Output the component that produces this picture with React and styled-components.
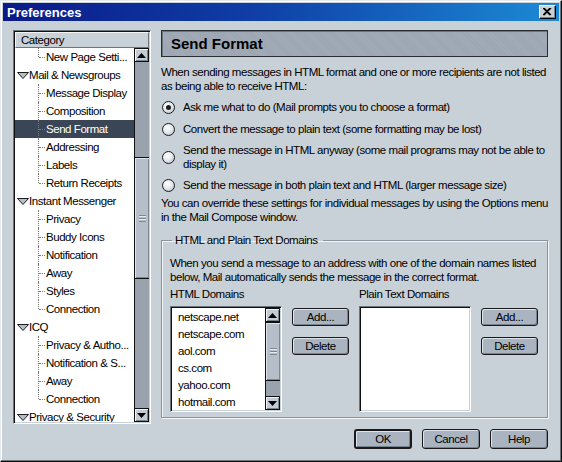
import React from "react";
import styled, { createGlobalStyle, css } from "styled-components";

const GlobalStyle = createGlobalStyle`
  html, body {
    margin: 0;
    padding: 0;
    background: #c8d0d8;
  }
  body {
    font-family: "Liberation Sans", Arial, sans-serif;
    font-size: 11.5px;
    letter-spacing: -0.45px;
    color: #000;
  }
`;

const categories = [
  { label: "New Page Setti...", child: true, last: true },
  { label: "Mail & Newsgroups" },
  { label: "Message Display", child: true },
  { label: "Composition", child: true },
  { label: "Send Format", child: true, selected: true },
  { label: "Addressing", child: true },
  { label: "Labels", child: true },
  { label: "Return Receipts", child: true, last: true },
  { label: "Instant Messenger" },
  { label: "Privacy", child: true },
  { label: "Buddy Icons", child: true },
  { label: "Notification", child: true },
  { label: "Away", child: true },
  { label: "Styles", child: true },
  { label: "Connection", child: true, last: true },
  { label: "ICQ" },
  { label: "Privacy & Autho...", child: true },
  { label: "Notification & S...", child: true },
  { label: "Away", child: true },
  { label: "Connection", child: true, last: true },
  { label: "Privacy & Security" },
];

const radios = [
  { text: "Ask me what to do (Mail prompts you to choose a format)", checked: true },
  { text: "Convert the message to plain text (some formatting may be lost)" },
  {
    text: (
      <>
        Send the message in HTML anyway (some mail programs may not be able to
        <br />
        display it)
      </>
    ),
  },
  { text: "Send the message in both plain text and HTML (larger message size)" },
];

const htmlDomains = [
  "netscape.net",
  "netscape.com",
  "aol.com",
  "cs.com",
  "yahoo.com",
  "hotmail.com",
];

const Arrow = ({ up }) => (
  <svg width="9" height="5" viewBox="0 0 9 5">
    <polygon points={up ? "4.5,0 9,5 0,5" : "0,0 9,0 4.5,5"} fill="#000" />
  </svg>
);

const Twisty = () => (
  <svg width="12" height="7" viewBox="0 0 12 7">
    <polygon
      points="0.5,0.5 11.5,0.5 6,6.5"
      fill="#b4bec9"
      stroke="#1c1c1c"
      strokeWidth="1"
    />
  </svg>
);

const Scrollbar = ({ thumbTop, thumbHeight }) => (
  <ScrollTrack>
    <ArrowButton>
      <Arrow up />
    </ArrowButton>
    <TrackArea>
      <Thumb style={{ top: thumbTop, height: thumbHeight }}>
        <Grip />
      </Thumb>
    </TrackArea>
    <ArrowButton>
      <Arrow />
    </ArrowButton>
  </ScrollTrack>
);

const App = () => {
  return (
    <>
      <GlobalStyle />
      <Window>
        <TitleBar>
          <TitleText>Preferences</TitleText>
          <CloseButton>
            <svg width="9" height="8" viewBox="0 0 9 8">
              <path d="M1 0 L8 7 M8 0 L1 7 M0 0 L7 7 M7 0 L0 7" stroke="#000" strokeWidth="1.2" />
            </svg>
          </CloseButton>
        </TitleBar>

        <Body>
          <Columns>
            <TreeBox>
              <TreeHeader>Category</TreeHeader>
              <TreeInner>
                <TreeRows>
                  {categories.map((item, i) => (
                    <TreeRow key={i} $selected={item.selected}>
                      {item.child ? (
                        <Connector $last={item.last} />
                      ) : (
                        <TwistyWrap>
                          <Twisty />
                        </TwistyWrap>
                      )}
                      <span>{item.label}</span>
                    </TreeRow>
                  ))}
                </TreeRows>
                <Scrollbar thumbTop={95} thumbHeight={122} />
              </TreeInner>
            </TreeBox>

            <Main>
              <PanelHeader>Send Format</PanelHeader>
              <Para $top={8}>
                When sending messages in HTML format and one or more recipients are not listed
                <br />
                as being able to receive HTML:
              </Para>
              <RadioGroup>
                {radios.map((r, i) => (
                  <RadioRow key={i}>
                    <Radio $checked={r.checked} />
                    <RadioText>{r.text}</RadioText>
                  </RadioRow>
                ))}
              </RadioGroup>
              <Para $top={3}>
                You can override these settings for individual messages by using the Options menu
                <br />
                in the Mail Compose window.
              </Para>

              <Group>
                <Legend>HTML and Plain Text Domains</Legend>
                <Para $top={9}>
                  When you send a message to an address with one of the domain names listed
                  <br />
                  below, Mail automatically sends the message in the correct format.
                </Para>
                <DomainGrid>
                  <ListLabel>HTML Domains</ListLabel>
                  <ListLabel>Plain Text Domains</ListLabel>
                  <ListBox>
                    <ListItems>
                      {htmlDomains.map((d) => (
                        <ListItem key={d}>{d}</ListItem>
                      ))}
                    </ListItems>
                    <Scrollbar thumbTop={0} thumbHeight={59} />
                  </ListBox>
                  <ButtonStack>
                    <Button>Add...</Button>
                    <Button>Delete</Button>
                  </ButtonStack>
                  <ListBox />
                  <ButtonStack>
                    <Button>Add...</Button>
                    <Button>Delete</Button>
                  </ButtonStack>
                </DomainGrid>
              </Group>
            </Main>
          </Columns>

          <Footer>
            <DialogButton $default>OK</DialogButton>
            <DialogButton>Cancel</DialogButton>
            <DialogButton>Help</DialogButton>
          </Footer>
        </Body>
      </Window>
    </>
  );
};

const Window = styled.div`
  box-sizing: border-box;
  width: 562px;
  height: 462px;
  background: #c8d0d8;
  border-top: 1px solid #e6eaee;
  border-left: 1px solid #e6eaee;
  border-right: 1px solid #101010;
  border-bottom: 1px solid #101010;
  box-shadow: inset -1px -1px 0 #6c747c, inset 1px 1px 0 #ffffff;
  padding: 2px 2px 0 2px;
`;

const TitleBar = styled.div`
  height: 18px;
  display: flex;
  align-items: center;
  justify-content: space-between;
  padding: 0 3px 0 4px;
  background: linear-gradient(90deg, #0a1a88 0%, #0f3ea6 45%, #1c8ad6 100%);
`;

const TitleText = styled.div`
  color: #fff;
  font-weight: bold;
  font-size: 13px;
  letter-spacing: 0;
`;

const CloseButton = styled.div`
  box-sizing: border-box;
  width: 17px;
  height: 14px;
  display: flex;
  align-items: center;
  justify-content: center;
  background: #c8d0d8;
  border: 1px solid #000;
  border-top-color: #f2f4f6;
  border-left-color: #f2f4f6;
  box-shadow: inset -1px -1px 0 #7a828a;
`;

const Body = styled.div`
  padding: 9px 11px 0 10px;
`;

const Columns = styled.div`
  display: flex;
  gap: 10px;
  height: 394px;
`;

const sunken = css`
  box-sizing: border-box;
  border: 1px solid;
  border-color: #6c747c #ffffff #ffffff #6c747c;
  box-shadow: inset 1px 1px 0 #101010, inset -1px -1px 0 #c8d0d8;
`;

const TreeBox = styled.div`
  ${sunken};
  width: 138px;
  height: 394px;
  padding: 1px;
  display: flex;
  flex-direction: column;
  background: #fff;
`;

const TreeHeader = styled.div`
  box-sizing: border-box;
  height: 16px;
  padding-left: 5px;
  line-height: 15px;
  background: #c8d0d8;
  border-top: 1px solid #f2f4f6;
  border-left: 1px solid #f2f4f6;
  border-right: 1px solid #6c747c;
  border-bottom: 1px solid #6c747c;
`;

const TreeInner = styled.div`
  flex: 1;
  display: flex;
  min-height: 0;
`;

const TreeRows = styled.div`
  flex: 1;
  overflow: hidden;
`;

const TreeRow = styled.div`
  height: 18px;
  display: flex;
  align-items: center;
  background: ${(p) => (p.$selected ? "#3a4656" : "transparent")};
  color: ${(p) => (p.$selected ? "#fff" : "#000")};
  white-space: nowrap;
`;

const TwistyWrap = styled.span`
  display: flex;
  margin-left: 2px;
  width: 12px;
`;

const Connector = styled.span`
  position: relative;
  margin-left: 23px;
  width: 8px;
  height: 18px;

  &::before {
    content: "";
    position: absolute;
    left: 0;
    top: 0;
    bottom: ${(p) => (p.$last ? "9px" : "0")};
    border-left: 1px dotted #7a7a7a;
  }

  &::after {
    content: "";
    position: absolute;
    left: 1px;
    top: 9px;
    width: 6px;
    border-top: 1px dotted #7a7a7a;
  }
`;

const ScrollTrack = styled.div`
  width: 14px;
  flex: none;
  display: flex;
  flex-direction: column;
  background: #9aa3ad;
  border-left: 1px solid #101010;
`;

const ArrowButton = styled.div`
  box-sizing: border-box;
  height: 14px;
  display: flex;
  align-items: center;
  justify-content: center;
  background: #c3cbd4;
  border: 1px solid #101010;
  border-left: none;
  box-shadow: inset 1px 1px 0 #f2f4f6, inset -1px -1px 0 #7a828a;
`;

const TrackArea = styled.div`
  flex: 1;
  position: relative;
`;

const Thumb = styled.div`
  position: absolute;
  left: 0;
  right: 0;
  box-sizing: border-box;
  background: #b6bfc9;
  border-bottom: 1px solid #101010;
  border-top: 1px solid #101010;
  box-shadow: inset 1px 1px 0 #dfe4ea, inset -1px -1px 0 #7e8790;
  display: flex;
  align-items: center;
  justify-content: center;
`;

const Grip = styled.div`
  width: 7px;
  height: 7px;
  background: repeating-linear-gradient(
    180deg,
    #7e8790 0,
    #7e8790 1px,
    #e6eaee 1px,
    #e6eaee 2px,
    transparent 2px,
    transparent 3px
  );
`;

const Main = styled.div`
  flex: 1;
  min-width: 0;
  display: flex;
  flex-direction: column;
`;

const PanelHeader = styled.div`
  box-sizing: border-box;
  height: 27px;
  padding-left: 9px;
  display: flex;
  align-items: center;
  font-size: 15px;
  font-weight: bold;
  letter-spacing: 0;
  background-color: #9ca6b2;
  background-image: repeating-linear-gradient(
    45deg,
    rgba(255, 255, 255, 0.06) 0,
    rgba(255, 255, 255, 0.06) 1px,
    transparent 1px,
    transparent 2px
  );
  border: 1px solid #2a2e33;
  box-shadow: inset 1px 1px 0 #6c747c;
`;

const Para = styled.div`
  margin-top: ${(p) => p.$top}px;
  line-height: 14px;
  white-space: nowrap;
`;

const RadioGroup = styled.div`
  margin-top: 6px;
  display: flex;
  flex-direction: column;
  gap: 6px;
`;

const RadioRow = styled.div`
  min-height: 16px;
  display: flex;
  align-items: center;
  gap: 8px;
  padding-left: 1px;
`;

const Radio = styled.span`
  box-sizing: border-box;
  flex: none;
  width: 13px;
  height: 13px;
  border-radius: 50%;
  border: 1px solid #1c1c1c;
  background: radial-gradient(circle at 40% 35%, #ffffff 0%, #e6eaee 45%, #aeb7c1 100%);
  display: flex;
  align-items: center;
  justify-content: center;

  &::after {
    content: "";
    width: 5px;
    height: 5px;
    border-radius: 50%;
    background: ${(p) => (p.$checked ? "#1c1c1c" : "transparent")};
  }
`;

const RadioText = styled.span`
  line-height: 14px;
  white-space: nowrap;
`;

const Group = styled.fieldset`
  margin: 9px 0 0 0;
  padding: 0 9px 5px 8px;
  border: 1px solid #8a949e;
  box-shadow: 1px 1px 0 #f2f4f6, inset 1px 1px 0 #f2f4f6;
  min-width: 0;
`;

const Legend = styled.legend`
  margin-left: 2px;
  padding: 0 5px 0 3px;
  line-height: 14px;
`;

const DomainGrid = styled.div`
  margin-top: 3px;
  display: grid;
  grid-template-columns: 112px 57px 112px 57px;
  grid-template-rows: 19px 106px;
  column-gap: 10px;
`;

const ListLabel = styled.div`
  grid-column: span 2;
  line-height: 14px;
`;

const ListBox = styled.div`
  ${sunken};
  background: #fff;
  padding: 1px;
  display: flex;
  height: 106px;
`;

const ListItems = styled.div`
  flex: 1;
  padding: 1px 0 0 6px;
  overflow: hidden;
`;

const ListItem = styled.div`
  height: 17px;
  line-height: 17px;
`;

const ButtonStack = styled.div`
  display: flex;
  flex-direction: column;
  gap: 11px;
  padding-top: 2px;
`;

const Button = styled.div`
  box-sizing: border-box;
  height: 18px;
  display: flex;
  align-items: center;
  justify-content: center;
  background: #a9b4c0;
  border: 1px solid #1a1a1a;
  border-radius: 3px;
  box-shadow: inset 1px 1px 0 #dde3e9, inset -1px -1px 0 #78828c;
`;

const Footer = styled.div`
  margin-top: 5px;
  display: flex;
  justify-content: flex-end;
  gap: 10px;
`;

const DialogButton = styled(Button)`
  width: 58px;
  height: 20px;
  border-width: ${(p) => (p.$default ? "2px" : "1px")};
`;

export default App;
